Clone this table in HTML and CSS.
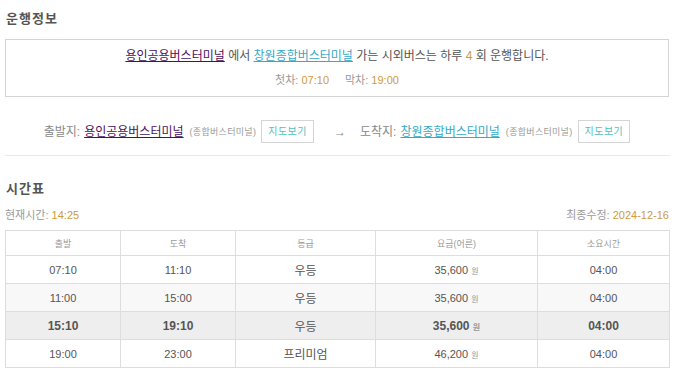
FILE: index.html
```html
<!DOCTYPE html>
<html lang="ko">
<head>
<meta charset="utf-8">
<link rel="stylesheet" href="styles.css">
</head>
<body>
<div class="page">
  <h2 class="title">운행정보</h2>
  <div class="infobox">
    <p class="line1"><a class="lk-dep" href="#">용인공용버스터미널</a> 에서 <a class="lk-arr" href="#">창원종합버스터미널</a> 가는 시외버스는 하루 <span class="num">4</span> 회 운행합니다.</p>
    <p class="line2">첫차: <span class="num">07:10</span><span class="gap"></span>막차: <span class="num">19:00</span></p>
  </div>
  <div class="route">
    <span class="lbl">출발지:</span><a class="lk-dep" href="#">용인공용버스터미널</a><span class="small">(종합버스터미널)</span><span class="btn">지도보기</span><span class="arrow">→</span><span class="lbl">도착지:</span><a class="lk-arr" href="#">창원종합버스터미널</a><span class="small">(종합버스터미널)</span><span class="btn">지도보기</span>
  </div>
  <div class="hr"></div>
  <h2 class="title t2">시간표</h2>
  <div class="meta">
    <span>현재시간: <span class="num">14:25</span></span>
    <span>최종수정: <span class="num">2024-12-16</span></span>
  </div>
  <table class="tt">
    <colgroup><col class="c1"><col class="c2"><col class="c3"><col class="c4"><col class="c5"></colgroup>
    <thead><tr><th>출발</th><th>도착</th><th>등급</th><th>요금(어른)</th><th>소요시간</th></tr></thead>
    <tbody>
      <tr><td>07:10</td><td>11:10</td><td class="kr">우등</td><td>35,600 <span class="won">원</span></td><td>04:00</td></tr>
      <tr class="alt"><td>11:00</td><td>15:00</td><td class="kr">우등</td><td>35,600 <span class="won">원</span></td><td>04:00</td></tr>
      <tr class="cur"><td>15:10</td><td>19:10</td><td class="kr">우등</td><td>35,600 <span class="won">원</span></td><td>04:00</td></tr>
      <tr><td>19:00</td><td>23:00</td><td class="kr">프리미엄</td><td>46,200 <span class="won">원</span></td><td>04:00</td></tr>
    </tbody>
  </table>
</div>
</body>
</html>
```
FILE: styles.css
```css
* { box-sizing: border-box; }
html, body { margin: 0; padding: 0; background: #fff; }
body {
  font-family: "Liberation Sans", Arial, "Noto Sans CJK KR", sans-serif;
  color: #555;
  font-size: 12px;
}
.page { width: 664px; margin-left: 5px; padding-top: 11px; }
.title {
  margin: 0 0 0 1px;
  font-size: 13px;
  font-weight: bold;
  color: #555;
  letter-spacing: 1px;
  line-height: 16px;
}
.infobox {
  margin-top: 12px;
  border: 1px solid #d5d5d5;
  height: 58px;
  text-align: center;
  padding-top: 8px;
}
.infobox p { margin: 0; }
.line1 { font-size: 12px; line-height: 16px; color: #555; }
.line2 { font-size: 11px; line-height: 14px; color: #999; margin-top: 9px !important; }
.gap { display: inline-block; width: 16px; }
.num { color: #d09a3c; }
.lk-dep { color: #4a1060; text-decoration: underline; }
.lk-arr { color: #35a9c8; text-decoration: underline; }
.route {
  margin-top: 22px;
  height: 24px;
  line-height: 24px;
  text-align: center;
  font-size: 12px;
  color: #888;
  white-space: nowrap;
}
.route > * { display: inline-block; vertical-align: middle; }
.route .lbl { color: #888; margin-right: 4px; }
.route .small { font-size: 9px; color: #999; margin-left: 6px; letter-spacing: 0.3px; }
.btn {
  border: 1px solid #d5d5d5;
  color: #52c0c0;
  font-size: 10px;
  line-height: 21px;
  height: 23px;
  padding: 0 6px;
  margin-left: 5px;
  letter-spacing: 0.5px;
}
.arrow { margin: 0 14px 0 20px; color: #888; }
.hr { margin-top: 12px; height: 1px; background: #e8e8e8; width: 665px; }
.t2 { margin-top: 25px; }
.meta {
  margin-top: 11px;
  display: flex;
  justify-content: space-between;
  font-size: 11px;
  color: #999;
  line-height: 14px;
}
.tt {
  margin-top: 8px;
  width: 664px;
  border-collapse: collapse;
  table-layout: fixed;
  font-size: 11px;
}
.c1 { width: 115px; } .c2 { width: 115px; } .c3 { width: 140px; } .c4 { width: 162px; } .c5 { width: 132px; }
.tt th, .tt td { border: 1px solid #ddd; text-align: center; }
.tt th { font-weight: normal; color: #999; font-size: 9px; height: 25px; }
.tt td { height: 28px; color: #555; }
.tt .kr { font-size: 12px; }
.tt .won { font-size: 8px; color: #999; }
.tt tr.alt td { background: #f8f8f8; }
.tt tr.cur td { background: #eeeeee; font-weight: bold; font-size: 12px; }
.tt tr.cur td.kr { font-weight: normal; }
```
